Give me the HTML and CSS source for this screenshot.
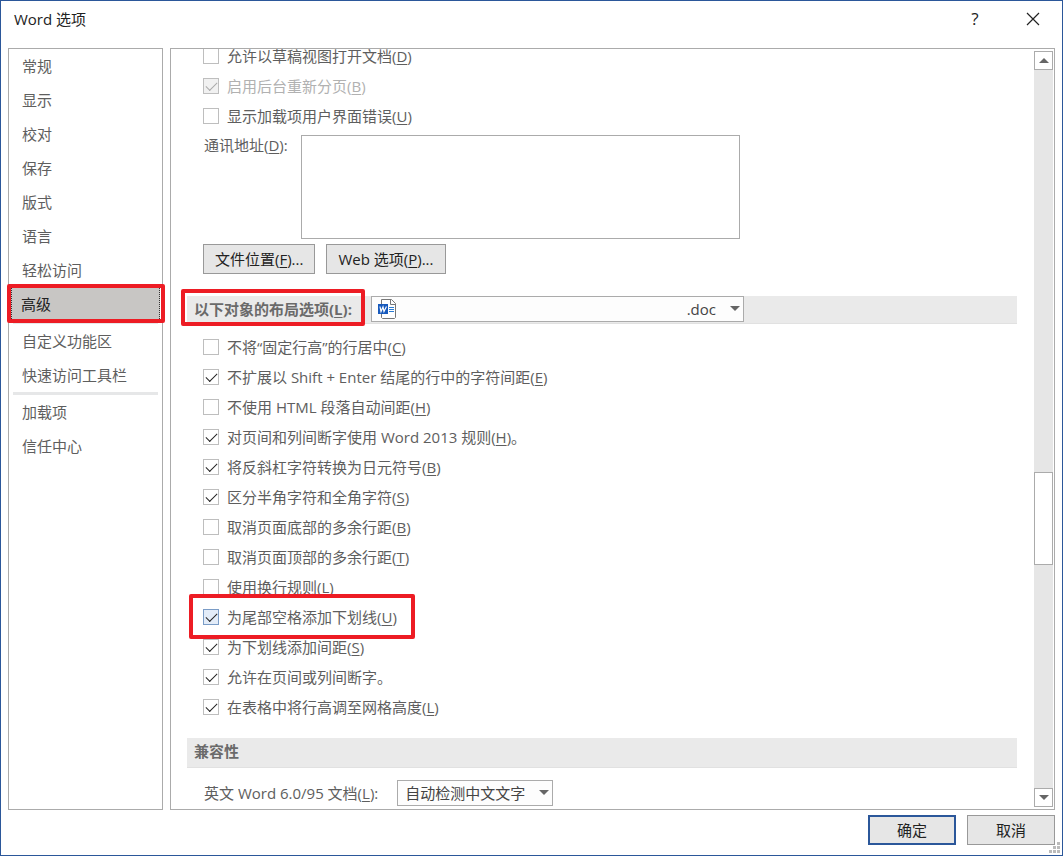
FILE: index.html
```html
<!DOCTYPE html>
<html lang="zh-CN">
<head>
    <meta charset="UTF-8">
    <meta name="viewport" content="width=device-width, initial-scale=1.0">
    <title>Word 选项</title>
    <link rel="stylesheet" href="styles.css">
</head>
<body>
    <div class="dialog">

        <!-- Title bar -->
        <header class="titlebar">
            <h1>Word 选项</h1>
            <button type="button" class="title-btn" aria-label="帮助">?</button>
            <button type="button" class="title-btn" aria-label="关闭">
                <svg width="14" height="14" viewBox="0 0 14 14"><path d="M1 1l12 12M13 1L1 13" fill="none" stroke="#222" stroke-width="1.2"/></svg>
            </button>
        </header>

        <div class="panes">
            <!-- Categories -->
            <nav class="sidebar">
                <a href="#general">常规</a>
                <a href="#display">显示</a>
                <a href="#proofing">校对</a>
                <a href="#save">保存</a>
                <a href="#layout">版式</a>
                <a href="#language">语言</a>
                <a href="#access">轻松访问</a>
                <a href="#advanced" class="active">高级</a>
                <hr>
                <a href="#ribbon">自定义功能区</a>
                <a href="#toolbar">快速访问工具栏</a>
                <hr>
                <a href="#addins">加载项</a>
                <a href="#trust">信任中心</a>
            </nav>

            <main class="content">
                <div class="options">
                    <div class="rows scrolled">
                        <label class="check"><input type="checkbox"><span>允许以草稿视图打开文档(<u>D</u>)</span></label>
                        <label class="check disabled"><input type="checkbox" checked disabled><span>启用后台重新分页(<u>B</u>)</span></label>
                        <label class="check"><input type="checkbox"><span>显示加载项用户界面错误(<u>U</u>)</span></label>
                    </div>
                    <div class="address">
                        <label for="address">通讯地址(<u>D</u>):</label>
                        <textarea id="address"></textarea>
                    </div>
                    <div class="buttons">
                        <button type="button" class="btn">文件位置(<u>F</u>)...</button>
                        <button type="button" class="btn">Web 选项(<u>P</u>)...</button>
                    </div>

                    <!-- Layout options -->
                    <div class="section section-layout">
                        <label for="layout-doc" class="section-label">以下对象的布局选项(<u>L</u>):</label>
                        <div class="select doc-select">
                            <select id="layout-doc"><option>.doc</option></select>
                            <svg class="doc-icon" width="20" height="20" viewBox="0 0 20 20">
                                <path d="M3.5 .5h10l4 4v14l-1 1h-12l-1-1z" fill="#fff" stroke="#777"/>
                                <path d="M12.5 .5v5h5" fill="none" stroke="#777"/>
                                <path d="M11 8.5h5M11 10.5h5M11 12.5h5" stroke="#2b7cd3"/>
                                <path d="M0 5h10v10H0z" fill="#185abd"/>
                                <path d="M2 7.5l1 5 2-4.500 1 4.500 2.500-5" fill="none" stroke="#fff" stroke-width="1.2"/>
                            </svg>
                        </div>
                    </div>
                    <div class="rows">
                        <label class="check"><input type="checkbox"><span>不将“固定行高”的行居中(<u>C</u>)</span></label>
                        <label class="check"><input type="checkbox" checked><span>不扩展以 Shift + Enter 结尾的行中的字符间距(<u>E</u>)</span></label>
                        <label class="check"><input type="checkbox"><span>不使用 HTML 段落自动间距(<u>H</u>)</span></label>
                        <label class="check"><input type="checkbox" checked><span>对页间和列间断字使用 Word 2013 规则(<u>H</u>)。</span></label>
                        <label class="check"><input type="checkbox" checked><span>将反斜杠字符转换为日元符号(<u>B</u>)</span></label>
                        <label class="check"><input type="checkbox" checked><span>区分半角字符和全角字符(<u>S</u>)</span></label>
                        <label class="check"><input type="checkbox"><span>取消页面底部的多余行距(<u>B</u>)</span></label>
                        <label class="check"><input type="checkbox"><span>取消页面顶部的多余行距(<u>T</u>)</span></label>
                        <label class="check"><input type="checkbox"><span>使用换行规则(<u>L</u>)</span></label>
                        <label class="check marked"><input type="checkbox" checked><span>为尾部空格添加下划线(<u>U</u>)</span></label>
                        <label class="check"><input type="checkbox" checked><span>为下划线添加间距(<u>S</u>)</span></label>
                        <label class="check"><input type="checkbox" checked><span>允许在页间或列间断字。</span></label>
                        <label class="check"><input type="checkbox" checked><span>在表格中将行高调至网格高度(<u>L</u>)</span></label>
                    </div>

                    <!-- Compatibility -->
                    <h2 class="section section-compat">兼容性</h2>
                    <div class="compat">
                        <label for="compat-doc">英文 Word 6.0/95 文档(<u>L</u>):</label>
                        <div class="select lang-select">
                            <select id="compat-doc"><option>自动检测中文文字</option></select>
                        </div>
                    </div>
                </div>

                <div class="scrollbar">
                    <button type="button" class="scroll-btn up" aria-label="向上滚动"></button>
                    <div class="track"><div class="thumb"></div></div>
                    <button type="button" class="scroll-btn down" aria-label="向下滚动"></button>
                </div>
            </main>
        </div>

        <footer class="footer">
            <button type="button" class="btn primary">确定</button>
            <button type="button" class="btn">取消</button>
        </footer>
        <svg class="grip" width="11" height="11" viewBox="0 0 11 11" fill="#bbb">
            <path d="M8 0h3v3H8zM4 4h3v3H4zM8 4h3v3H8zM0 8h3v3H0zM4 8h3v3H4zM8 8h3v3H8z"/>
        </svg>
    </div>
</body>
</html>
```

FILE: styles.css
```css
* {
    margin: 0;
    padding: 0;
    box-sizing: border-box;
}
body, button, select, textarea {
    font-family: "Open Sans", "Noto Sans CJK SC", sans-serif;
    font-size: 15px;
    line-height: 20px;
    color: #5e5e5e;
}
u {
    text-underline-offset: 2px;
    text-decoration-thickness: 1px;
}
.dialog {
    position: relative;
    display: flex;
    flex-direction: column;
    height: 100vh;
    border: 1px solid #2b579a;
    background: #fff;
}

/* title bar */
.titlebar {
    display: flex;
    align-items: center;
    height: 47px;
    padding: 0 6px 12px 13px;
}
.titlebar h1 {
    flex: 1;
    font-size: 15px;
    font-weight: normal;
    color: #222;
}
.title-btn {
    display: flex;
    align-items: center;
    justify-content: center;
    width: 46px;
    height: 30px;
    margin-left: 12px;
    border: none;
    background: none;
    color: #222;
    font-size: 17px;
}

/* panes */
.panes {
    flex: 1;
    min-height: 0;
    display: flex;
    gap: 7px;
    padding: 0 7px;
}
.sidebar {
    width: 155px;
    flex-shrink: 0;
    border: 1px solid #ababab;
}
.sidebar a {
    display: block;
    height: 34px;
    padding-left: 13px;
    line-height: 34px;
    color: #5e5e5e;
    text-decoration: none;
}
.sidebar a.active {
    position: relative;
    margin: 0 2px;
    padding-left: 9px;
    border: 1px dotted #333;
    background: #c8c6c4;
    color: #222;
    line-height: 32px;
}
.sidebar hr {
    height: 3px;
    margin: 0 4px;
    border: none;
    background: #e6e7e8;
}
.content {
    flex: 1;
    min-width: 0;
    display: flex;
    border: 1px solid #ababab;
    overflow: hidden;
}
.options {
    flex: 1;
    padding: 0 16px;
}
.rows {
    padding: 8px 0 0 16px;
}
.rows.scrolled {
    margin-top: -16px;
}

/* check boxes */
.check {
    position: relative;
    display: flex;
    align-items: center;
    gap: 8px;
    width: fit-content;
    height: 30px;
}
.check input {
    appearance: none;
    display: flex;
    justify-content: center;
    width: 16px;
    height: 16px;
    border: 1px solid #bebebe;
    background: #fff;
}
.check input:checked::after {
    content: "";
    width: 10px;
    height: 5px;
    margin-top: 3px;
    border-left: 1px solid #222;
    border-bottom: 1px solid #222;
    transform: rotate(-45deg);
}
.check.disabled {
    color: #b1b1b1;
}
.check.disabled input {
    background: #f1f1f1;
}
.check.disabled input::after {
    border-color: #aaa;
}
.check.marked input {
    border-color: #7a9cc6;
    background: #e3ecf8;
}

/* red callouts */
.active::after,
.marked::after,
.section-label::after {
    content: "";
    position: absolute;
    z-index: 1;
    border: 4px solid #ed1c24;
    border-radius: 2px;
}
.active::after {
    inset: -4px -6px -3px -5px;
}
.marked::after {
    inset: -8px -18px -7px -14px;
}
.section-label::after {
    inset: -7px -10px -3px -13px;
}

.address {
    display: flex;
    gap: 13px;
    padding: 4px 0 0 17px;
}
.address textarea {
    width: 439px;
    height: 104px;
    border: 1px solid #ababab;
    resize: none;
}
.buttons {
    display: flex;
    gap: 11px;
    padding: 5px 0 0 16px;
}
.btn {
    height: 30px;
    padding: 0 11px;
    border: 1px solid #999;
    background: #e6e6e6;
    color: #222;
}

/* section headings */
.section {
    background: #eaeaea;
    border-bottom: 1px solid #e1e1e1;
    color: #6a6a6a;
    font-size: 15px;
    font-weight: bold;
}
.section-layout {
    display: flex;
    gap: 16px;
    height: 28px;
    margin-top: 22px;
    padding-left: 7px;
}
.section-label {
    position: relative;
    min-width: 161px;
    line-height: 26px;
}
.section-compat {
    height: 30px;
    margin-top: 16px;
    padding-left: 7px;
    line-height: 26px;
}
.compat {
    display: flex;
    align-items: center;
    gap: 19px;
    padding: 12px 0 0 17px;
}

/* drop-downs */
.select {
    position: relative;
    height: 26px;
}
.select select {
    appearance: none;
    width: 100%;
    height: 100%;
    padding: 0 27px 0 7px;
    border: 1px solid #ababab;
    border-radius: 0;
    background: #fdfdfd;
    color: #444;
}
.select::after {
    content: "";
    position: absolute;
    top: 10px;
    right: 4px;
    border: 5px solid transparent;
    border-top-color: #666;
    border-bottom: none;
}
.doc-select {
    width: 373px;
}
.doc-select select {
    text-align: right;
    text-align-last: right;
}
.doc-icon {
    position: absolute;
    top: 3px;
    left: 7px;
}
.lang-select {
    width: 156px;
}

/* scroll bar */
.scrollbar {
    display: flex;
    flex-direction: column;
    width: 19px;
    margin: 2px 1px;
    background: #e6e6e6;
}
.scroll-btn {
    display: flex;
    align-items: center;
    justify-content: center;
    height: 19px;
    border: 1px solid #ababab;
    background: #fff;
}
.scroll-btn::after {
    content: "";
    border: 5px solid transparent;
}
.up::after {
    border-bottom-color: #666;
    border-top: none;
}
.down::after {
    border-top-color: #666;
    border-bottom: none;
}
.track {
    position: relative;
    flex: 1;
}
.thumb {
    position: absolute;
    top: 56%;
    width: 100%;
    height: 13%;
    border: 1px solid #ababab;
    background: #fff;
}

.footer {
    display: flex;
    justify-content: flex-end;
    gap: 11px;
    padding: 5px 7px 10px;
}
.footer .btn {
    width: 88px;
}
.btn.primary {
    border: 2px solid #2b579a;
}
.grip {
    position: absolute;
    right: 2px;
    bottom: 2px;
}
```
